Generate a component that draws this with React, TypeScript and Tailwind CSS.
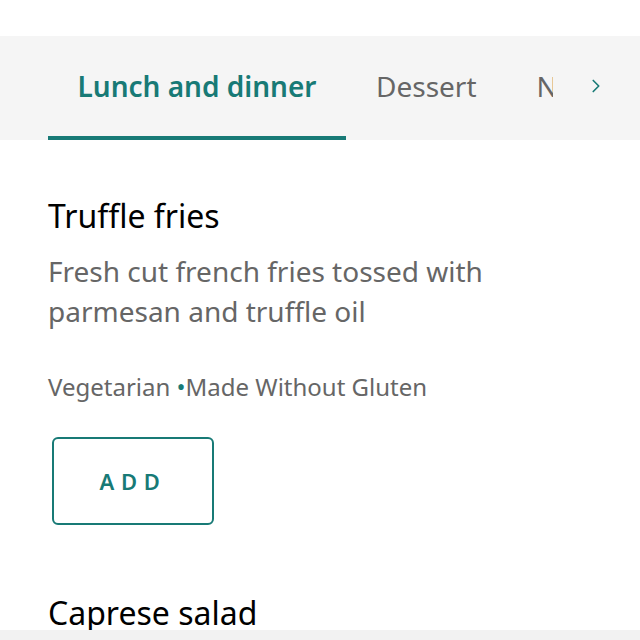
import { ChevronRight } from "lucide-react";

export default function App() {
  return (
    <main className="relative h-[640px] w-[640px] overflow-hidden bg-white font-['Noto_Sans',sans-serif]">
      <div className="h-9" />
      <nav className="flex h-[104px] items-stretch bg-[#f5f5f5] pl-12">
        <div className="flex w-[298px] flex-col justify-center border-b-4 border-[#187a76]">
          <span className="text-center text-[28px] font-semibold text-[#187a76]">Lunch and dinner</span>
        </div>
        <div className="flex items-center pb-1 pl-[30px] text-[28px] text-[#666]">Dessert</div>
        <div className="ml-[60px] flex w-[16px] items-center overflow-hidden pb-1 text-[28px] text-[#666]">N</div>
        <div className="flex items-center pb-1 pl-[32px] text-[#187a76]">
          <ChevronRight size={22} strokeWidth={1.8} />
        </div>
      </nav>

      <section className="px-12 pt-[54px]">
        <h2 className="text-[32px] leading-[44px] text-black">Truffle fries</h2>
        <p className="mt-[13px] text-[28px] leading-[40px] text-[#666]">
          Fresh cut french fries tossed with
          <br />
          parmesan and truffle oil
        </p>
        <p className="mt-[40px] text-[24px] leading-[32px] text-[#666]">
          Vegetarian <span className="text-[#187a76]">•</span>Made Without Gluten
        </p>
        <button className="ml-1 mt-[34px] flex h-[88px] w-[162px] items-center justify-center rounded-md border-2 border-[#187a76] text-[22px] font-semibold tracking-[0.3em] text-[#187a76]">
          ADD
        </button>
        <h2 className="mt-[66px] text-[32px] leading-[44px] text-black">Caprese salad</h2>
      </section>

      <div className="absolute bottom-0 left-0 h-[10px] w-full bg-[#f2f2f2]" />
    </main>
  );
}
